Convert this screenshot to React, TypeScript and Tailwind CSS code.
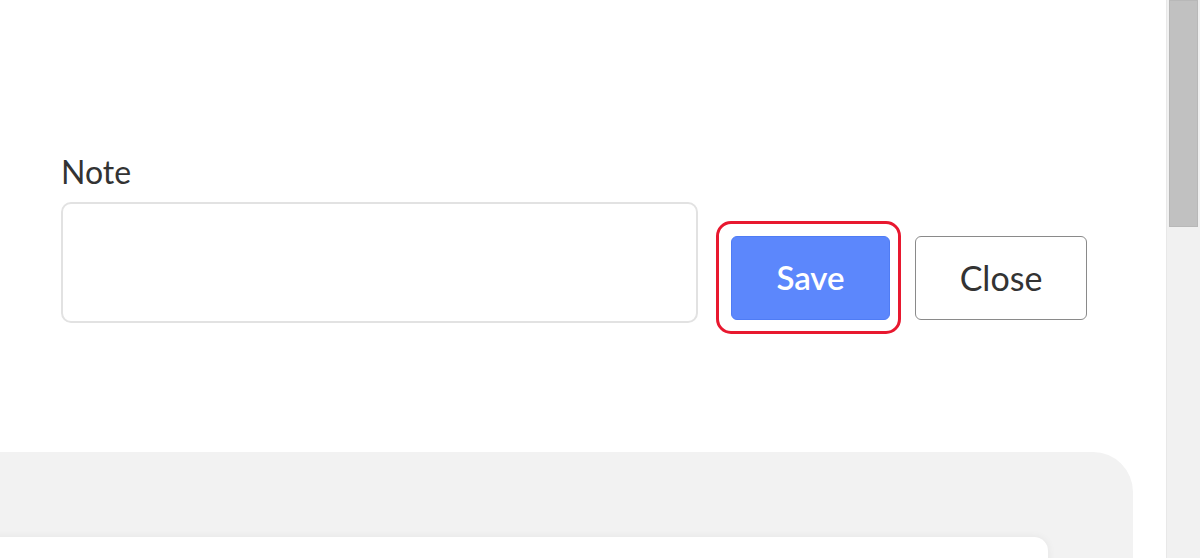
import React from "react";

export default function App() {
  return (
    <div
      className="flex h-[558px] w-[1200px] overflow-hidden bg-white"
      style={{ fontFamily: "Lato, 'Open Sans', sans-serif" }}
    >
      <div className="relative min-w-0 flex-1">
        <div className="pl-[61px] pt-[154px]">
          <label className="mb-[12px] block text-[32px] leading-[36px] text-[#333333]">
            Note
          </label>
          <div className="flex items-start">
            <textarea className="h-[121px] w-[637px] resize-none rounded-[10px] border-2 border-[#e2e2e2] bg-white outline-none" />
            <div className="relative ml-[33px] mt-[34px]">
              <div className="absolute -bottom-[14px] -left-[15px] -right-[11px] -top-[15px] rounded-[15px] border-[3px] border-[#e8182f]" />
              <button className="relative flex h-[84px] w-[159px] items-center justify-center rounded-[6px] border border-[#4f7cf5] bg-[#5c87fc] pb-[1px] text-[33px] font-semibold text-white">
                Save
              </button>
            </div>
            <button className="ml-[25px] mt-[34px] flex h-[84px] w-[172px] items-center justify-center rounded-[6px] border border-[#8a8a8a] bg-white pb-[1px] text-[34px] text-[#333333]">
              Close
            </button>
          </div>
        </div>
        <div className="ml-[-40px] mr-[33px] mt-[129px] h-[200px] rounded-tr-[40px] bg-[#f2f2f2] pr-[85px] pt-[85px]">
          <div className="h-[120px] rounded-tr-[14px] bg-white shadow-[0_0_8px_rgba(0,0,0,0.06)]" />
        </div>
      </div>
      <div className="w-[34px] shrink-0 border-l border-[#e8e8e8] bg-[#f1f1f1] pl-[2px] pr-[2px]">
        <div className="h-[227px] w-full border border-[#b8b8b8] bg-[#c1c1c1]" />
      </div>
    </div>
  );
}
